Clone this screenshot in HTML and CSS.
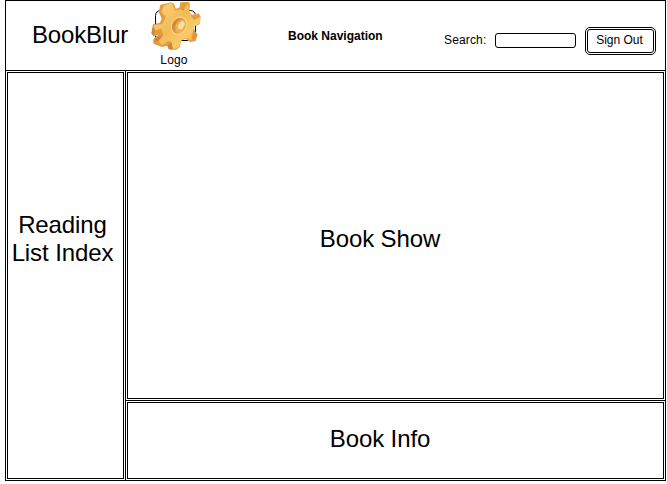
FILE: index.html
```html
<!DOCTYPE html>
<html lang="en">
<head>
<meta charset="utf-8">
<title>BookBlur</title>
<link rel="stylesheet" href="styles.css">
</head>
<body>
<div class="app">
  <header class="header">
    <h1 class="brand">BookBlur</h1>
    <div class="logo">
      <svg class="gear" viewBox="0 0 150 150" aria-hidden="true">
        <defs>
          <linearGradient id="face" x1="0" y1="0" x2="1" y2="1">
            <stop offset="0" stop-color="#fcd77c"/>
            <stop offset=".45" stop-color="#f2bb58"/>
            <stop offset=".7" stop-color="#f7cb68"/>
            <stop offset="1" stop-color="#dd9038"/>
          </linearGradient>
          <linearGradient id="side" x1="0" y1="0" x2="1" y2="0">
            <stop offset="0" stop-color="#e09a40"/>
            <stop offset="1" stop-color="#e9a847"/>
          </linearGradient>
          <linearGradient id="bore" x1="0" y1="0" x2="1" y2="0">
            <stop offset="0" stop-color="#c98035"/>
            <stop offset="1" stop-color="#f2bd60"/>
          </linearGradient>
        </defs>
        <rect class="frame" x="13.5" y="28.5" width="120" height="90" rx="15"/>
        <path fill="url(#side)" d="M28 11L62 4L70 10L74 23L85 20L88 4L112 2L117 8L115 32L123 41L143 37L149 48L146 70L128 77L128 85L140 101L134 120L118 124L103 113L91 119L85 141L72 147L53 145L49 134L33 138L7 128L7 115L22 101L7 106L2 95L6 70L27 65L32 53L23 33Z"/>
        <path fill="url(#face)" d="M39 14L62 4L72 29L87 25L94 7L112 5L114 32L121 45L143 39L148 48L146 67L128 76L126 87L137 105L126 121L105 111L90 118L85 139L66 145L61 124L53 119L33 133L22 121L37 100L31 83L11 88L8 73L34 69L45 48L31 33Z"/>
        <path fill="#cf8438" d="M6 76L12 88L7 106L1 96ZM61 124L66 145L54 145L49 134ZM37 100L22 121L10 121L12 112Z"/>
        <path fill="#d27f35" fill-opacity=".6" d="M87 25L94 6L114 6L103 16L98 30ZM121 45L143 39L148 48L129 57ZM128 84L139 104L126 121L122 108Z"/>
        <ellipse cx="84" cy="74" rx="24" ry="29" transform="rotate(30 84 74)" fill="#fbd57d"/>
        <ellipse cx="84" cy="74" rx="20" ry="25" transform="rotate(30 84 74)" fill="url(#bore)"/>
        <ellipse cx="89" cy="76" rx="15" ry="20" transform="rotate(30 89 76)" fill="#edb157"/>
        <ellipse cx="91" cy="73" rx="8" ry="13" transform="rotate(30 91 73)" fill="#fbdf9d"/>
      </svg>
      <span>Logo</span>
    </div>
    <nav class="nav">Book Navigation</nav>
    <label class="search"><span>Search:</span><input type="text"></label>
    <button class="signout">Sign Out</button>
  </header>
  <aside class="panel list"><span>Reading<br>List Index</span></aside>
  <main class="panel show"><span>Book Show</span></main>
  <section class="panel info"><span>Book Info</span></section>
</div>
</body>
</html>
```
FILE: styles.css
```css
* { box-sizing: border-box; }
body {
  margin: 0;
  background: #fff;
  color: #000;
  font: 12px/14px "Liberation Sans", Arial, sans-serif;
}
.app {
  display: grid;
  grid-template-columns: 120px 541px;
  grid-template-rows: 70px 330px 81px;
  width: 661px;
  margin-left: 5px;
}
.header {
  grid-column: 1 / -1;
  display: flex;
  align-items: flex-start;
  border: 1px solid #000;
  border-bottom: 0;
}
.brand {
  width: 97px;
  margin: 20px 0 0 26px;
  font-size: 24px;
  font-weight: 400;
  line-height: 28px;
  letter-spacing: -0.15px;
  white-space: nowrap;
}
.logo {
  width: 50px;
  margin-left: 22px;
  display: flex;
  flex-direction: column;
  align-items: center;
}
.gear { display: block; width: 50px; height: 50px; margin-bottom: 2px; }
.logo span { margin-right: 4px; letter-spacing: 0.15px; }
.frame { fill: #fff; stroke: #000; stroke-width: 3; }
.nav { margin: 28px 0 0 87px; width: 95px; font-weight: 700; white-space: nowrap; }
.search { display: flex; margin: 32px 0 0 61px; }
.search span { width: 51px; letter-spacing: 0.15px; }
.search input {
  width: 81px;
  height: 15px;
  padding: 0 3px;
  border: 1px solid #000;
  border-radius: 3px;
  background: #fff;
}
.signout {
  width: 71px;
  height: 28px;
  margin: 26px 0 0 9px;
  padding: 0 2px 2px 0;
  border: 3px double #000;
  border-radius: 5px;
  background: #fff;
  color: #000;
  font: inherit;
}
.panel {
  display: flex;
  align-items: center;
  justify-content: center;
  border: 3px double #000;
  text-align: center;
  font-size: 24px;
  line-height: 28px;
  letter-spacing: -0.1px;
}
.list { grid-row: 2 / 4; width: 121px; }
.list span { margin: 0 6px 74px 0; white-space: nowrap; }
.show { height: 331px; }
.show span { margin: 7px 31px 0 0; }
.info span { margin: 0 31px 4px 0; }
```
